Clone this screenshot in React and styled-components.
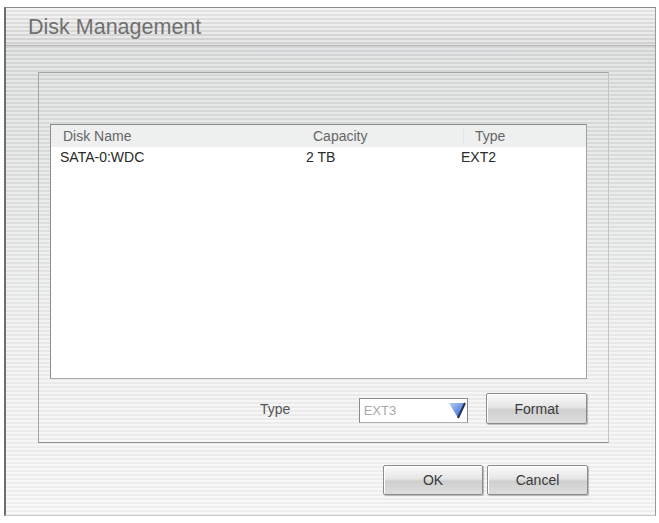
import React from 'react';
import styled, { createGlobalStyle } from 'styled-components';

const GlobalStyle = createGlobalStyle`
  html, body {
    margin: 0;
    padding: 0;
    background: #fff;
    font-family: 'Liberation Sans', Arial, sans-serif;
  }
`;

const stripes = (a, b) => `repeating-linear-gradient(
  180deg,
  ${a} 0px,
  ${a} 2px,
  ${b} 2px,
  ${b} 4px
)`;

const Window = styled.div`
  margin: 7px 0 0 4px;
  width: 652px;
  height: 509px;
  box-sizing: border-box;
  border-top: 1px solid #8a8a8a;
  border-left: 2px solid #6e6e6e;
  border-right: 1px solid #9a9a9a;
  border-bottom: 1px solid #c8c8c8;
  display: flex;
  flex-direction: column;
  background: ${stripes('rgba(255,255,255,0.3)', 'rgba(0,0,0,0.03)')},
    linear-gradient(180deg, #d6d9d9 0%, #e2e4e4 35%, #f1f1f1 72%, #f6f6f6 100%);
`;

const TitleBar = styled.div`
  height: 37px;
  display: flex;
  align-items: center;
  padding-left: 22px;
  border-bottom: 1px solid #b4b4b4;
  background: ${stripes('rgba(255,255,255,0.35)', 'rgba(0,0,0,0.04)')},
    linear-gradient(180deg, #eeeeee 0%, #d8d8d8 100%);
`;

const Title = styled.span`
  font-size: 21.5px;
  color: #707070;
  padding-top: 2px;
`;

const Body = styled.div`
  flex: 1;
  display: flex;
  flex-direction: column;
  padding: 26px 0 0 32px;
`;

const Group = styled.div`
  width: 571px;
  height: 371px;
  box-sizing: border-box;
  border: 1px solid #a4a4a4;
  border-right-color: #c4c4c4;
  border-bottom-color: #8e8e8e;
  display: flex;
  flex-direction: column;
  padding: 51px 21px 0 11px;
`;

const ListBox = styled.div`
  height: 255px;
  box-sizing: border-box;
  border: 1px solid #8c8c8c;
  border-bottom-color: #a8a8a8;
  border-right-color: #a0a0a0;
  background: #fff;
  display: flex;
  flex-direction: column;
`;

const Row = styled.div`
  display: grid;
  grid-template-columns: ${({ $head }) => ($head ? '250px 150px 1fr' : '246px 155px 1fr')};
  align-items: center;
  height: ${({ $head }) => ($head ? '22px' : '20px')};
  padding-left: ${({ $head }) => ($head ? '12px' : '9px')};
  background: ${({ $head }) => ($head ? '#eeefef' : '#fff')};
  font-size: 14px;
  color: ${({ $head }) => ($head ? '#666' : '#2a2a2a')};
`;

const Cell = styled.span`
  white-space: nowrap;
  padding-left: ${({ $sep }) => ($sep ? '11px' : '0')};
  border-left: ${({ $sep }) => ($sep ? '1px solid #e4e4e4' : 'none')};
`;

const Controls = styled.div`
  display: flex;
  align-items: center;
  margin-top: 14px;
  padding-left: 210px;
`;

const Label = styled.span`
  font-size: 14px;
  color: #555;
  width: 99px;
`;

const Select = styled.div`
  width: 110px;
  height: 25px;
  margin-top: 3px;
  box-sizing: border-box;
  border: 1px solid #8a8a8a;
  border-bottom-color: #b0b0b0;
  background: #fff;
  display: flex;
  align-items: center;
  justify-content: space-between;
  padding: 0 1px 0 4px;
  font-size: 13px;
  color: #a8a8a8;
`;

const Button = styled.div`
  width: ${({ $w }) => $w || 101}px;
  height: ${({ $h }) => $h || 30}px;
  box-sizing: border-box;
  border: 1px solid #8c8c8c;
  border-radius: 2px;
  box-shadow: inset 1px 1px 0 #fff, 1px 1px 1px rgba(0, 0, 0, 0.25);
  background: linear-gradient(180deg, #fafafa 0%, #e6e6e6 45%, #cfcfcf 55%, #dedede 100%);
  display: flex;
  align-items: center;
  justify-content: center;
  font-size: 14px;
  color: #3a3a3a;
  margin-left: ${({ $gap }) => $gap || 0}px;
`;

const Footer = styled.div`
  display: flex;
  justify-content: flex-end;
  padding-right: 67px;
  margin-top: 22px;
`;

const Arrow = () => (
  <svg width="18" height="18" viewBox="0 0 18 18">
    <defs>
      <linearGradient id="ag" x1="0" y1="0" x2="1" y2="1">
        <stop offset="0" stopColor="#b8cdf3" />
        <stop offset="0.6" stopColor="#5f8ae0" />
        <stop offset="1" stopColor="#3b62b8" />
      </linearGradient>
    </defs>
    <polygon points="1,2 17,2 10,17" fill="url(#ag)" />
    <polyline points="17,2 10,17" fill="none" stroke="#23324f" strokeWidth="2" />
  </svg>
);

const App = () => (
  <>
    <GlobalStyle />
    <Window>
      <TitleBar>
        <Title>Disk Management</Title>
      </TitleBar>
      <Body>
        <Group>
          <ListBox>
            <Row $head>
              <Cell>Disk Name</Cell>
              <Cell>Capacity</Cell>
              <Cell $sep>Type</Cell>
            </Row>
            <Row>
              <Cell>SATA-0:WDC</Cell>
              <Cell>2 TB</Cell>
              <Cell>EXT2</Cell>
            </Row>
          </ListBox>
          <Controls>
            <Label>Type</Label>
            <Select>
              <span>EXT3</span>
              <Arrow />
            </Select>
            <Button $gap={18} $h={31}>Format</Button>
          </Controls>
        </Group>
        <Footer>
          <Button $w={100}>OK</Button>
          <Button $gap={4}>Cancel</Button>
        </Footer>
      </Body>
    </Window>
  </>
);

export default App;
